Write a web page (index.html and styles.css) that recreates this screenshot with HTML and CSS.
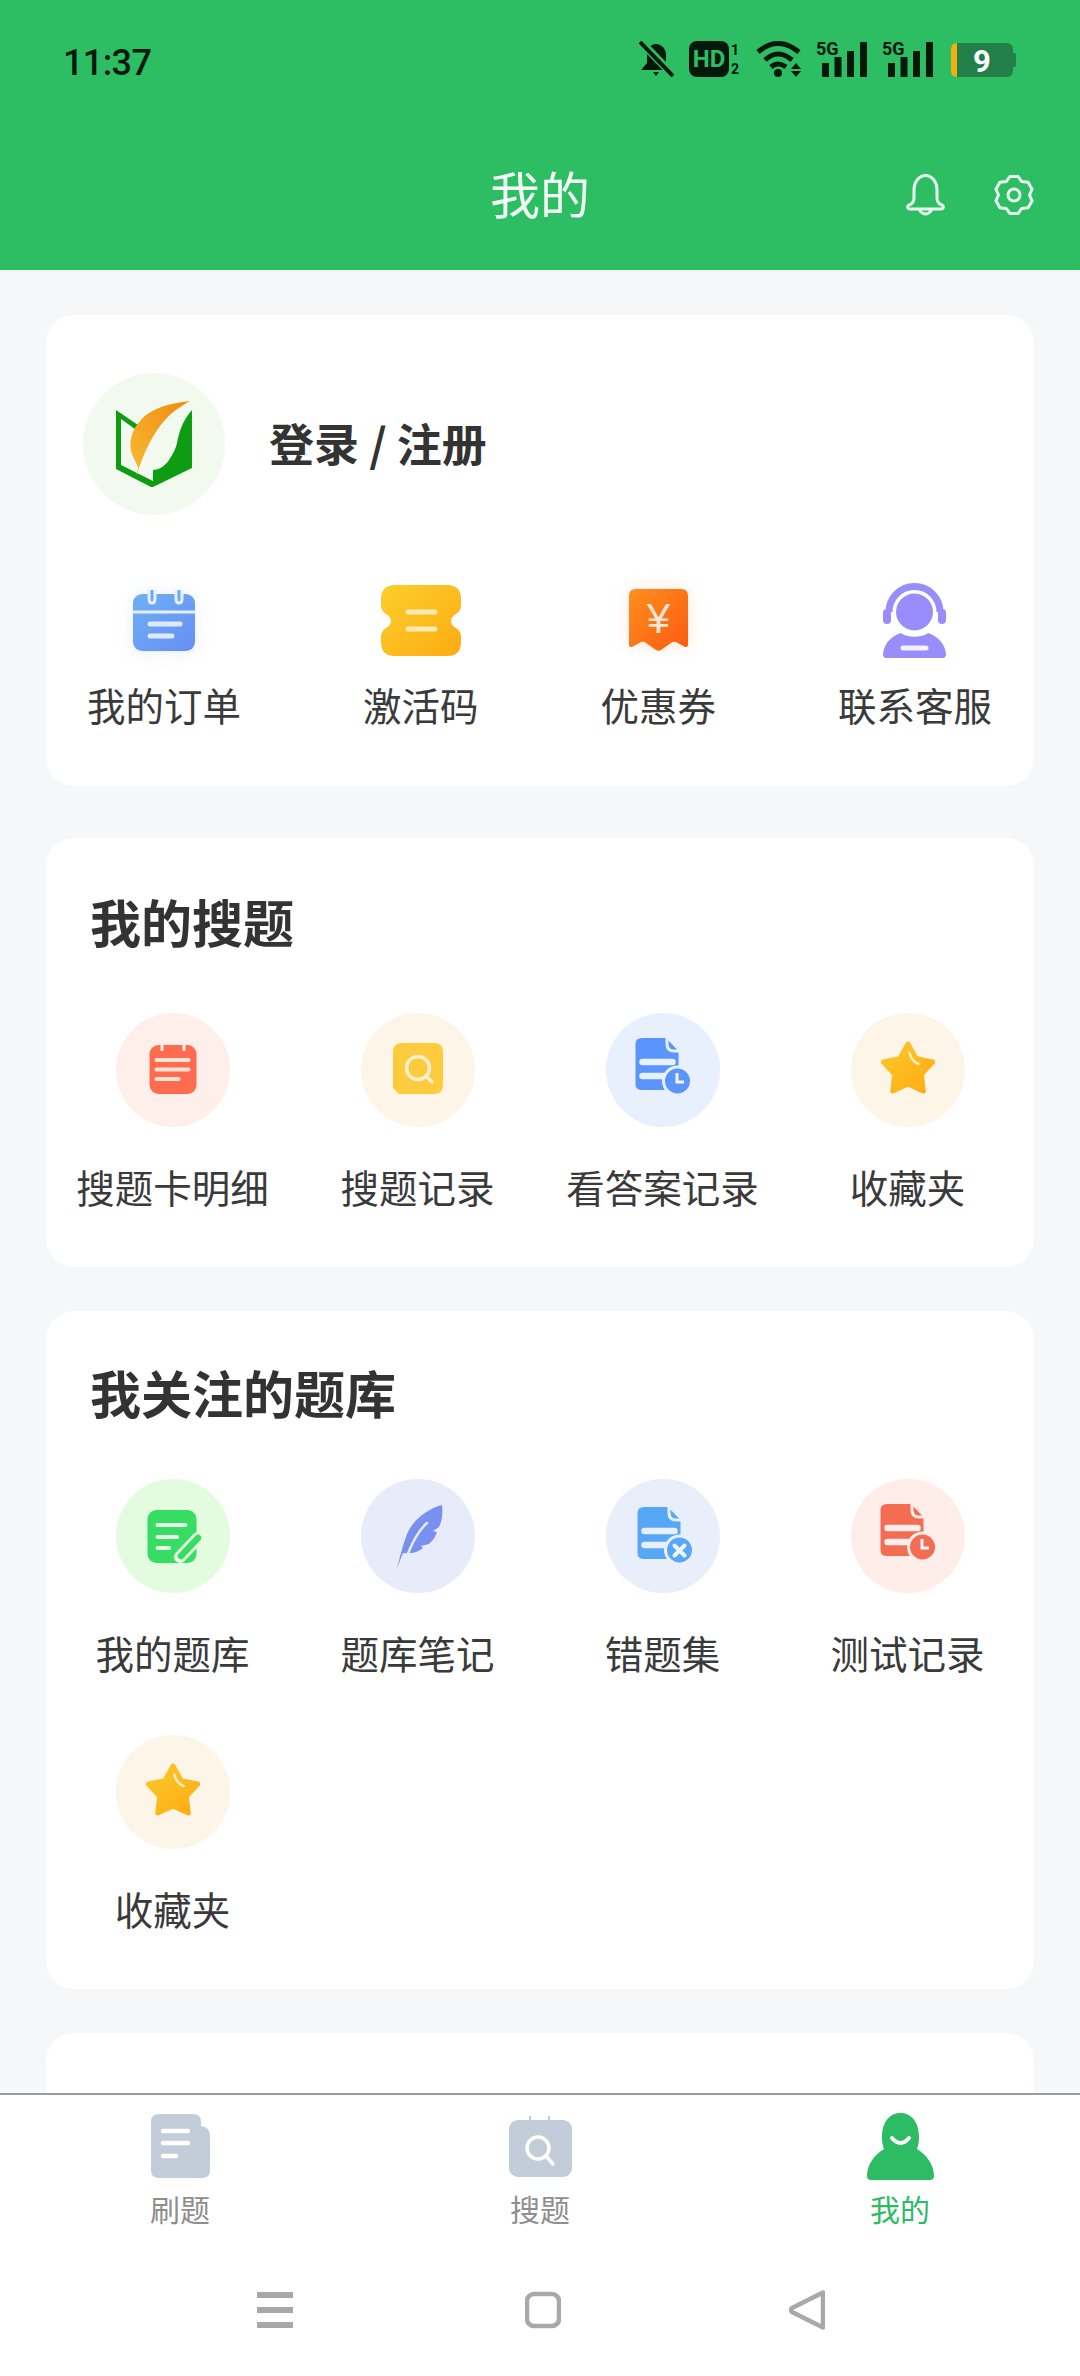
FILE: index.html
```html
<!DOCTYPE html>
<html lang="zh-CN">
<head>
<meta charset="utf-8">
<title>我的</title>
<link rel="stylesheet" href="styles.css">
</head>
<body>
<svg class="defs" width="0" height="0" aria-hidden="true">
  <defs>
    <linearGradient id="gOrder" x1="0" y1="0" x2="1" y2="1"><stop offset="0" stop-color="#6fb0f6"/><stop offset="1" stop-color="#668ef3"/></linearGradient>
    <linearGradient id="gCode" x1="0" y1="0" x2="1" y2="1"><stop offset="0" stop-color="#fbcf2c"/><stop offset="1" stop-color="#fdab12"/></linearGradient>
    <linearGradient id="gTicket" x1="0" y1="0" x2="1" y2="1"><stop offset="0" stop-color="#ff8f1f"/><stop offset="1" stop-color="#fb5a10"/></linearGradient>
    <linearGradient id="gStar" x1="0" y1="0" x2="1" y2="1"><stop offset="0" stop-color="#fcc82c"/><stop offset="1" stop-color="#fdac12"/></linearGradient>
    <linearGradient id="gLeaf" x1="1" y1="0" x2="0" y2="1"><stop offset="0" stop-color="#ee8a12"/><stop offset="1" stop-color="#f9bb30"/></linearGradient>
    <symbol id="doc" viewBox="0 0 114 114">
      <path class="fill" d="M36,25H60L72.5,38V71Q72.5,77 66,77H36Q29.5,77 29.5,71V31Q29.5,25 36,25Z"/>
      <path class="tint-line thin" d="M61,24V31Q61,38 68,38H74"/>
      <path class="tint-line bar" d="M36.5,49H66.5M36.5,63H58"/>
      <circle class="fill ring" cx="71.5" cy="68" r="14"/>
    </symbol>
    <symbol id="star" viewBox="0 0 114 114">
      <path class="star-body" d="M57,31L65.2,45.7L81.7,49L70.3,61.3L72.3,78L57,71L41.7,78L43.7,61.3L32.3,49L48.8,45.7Z"/>
      <path class="star-shine" d="M58.5,40Q60.5,48 67.5,51"/>
    </symbol>
  </defs>
</svg>

<div class="app">
  <header class="header">
    <div class="status">
      <span class="time">11:37</span>
      <div class="status-icons">
        <svg class="si-bell" width="35" height="36" viewBox="0 0 35 36">
          <path class="ink" d="M17,3C23,3 27,8 27,14V22L32,29H2L8,22V14C8,8 11,3 17,3Z"/>
          <path class="ink" d="M14,31H20L17,35Z"/>
          <path class="slash-bg" d="M1,0L34,34"/>
          <path class="slash" d="M1,1L34,35"/>
        </svg>
        <svg class="si-hd" width="51" height="36" viewBox="0 0 51 36">
          <rect class="ink" x="0" y="0" width="40" height="36" rx="8"/>
          <text class="hd-text" x="20" y="26">HD</text>
          <text class="hd-num" x="46" y="14">1</text>
          <text class="hd-num" x="46" y="33">2</text>
        </svg>
        <svg class="si-wifi" width="45" height="36" viewBox="0 0 45 36">
          <path class="wave" d="M2,11Q22,-6 43,11M9,19Q22,7 36,19M15,26Q22,20 30,26"/>
          <circle class="ink" cx="22" cy="32" r="4"/>
          <path class="ink" d="M40,22L45,28H35ZM35,30H45L40,36Z"/>
        </svg>
        <svg class="si-net" width="51" height="40" viewBox="0 -4 51 40">
          <text class="net-text" x="0" y="14">5G</text>
          <rect class="ink" x="6" y="22" width="7" height="14"/>
          <rect class="ink" x="18.5" y="16" width="7" height="20"/>
          <rect class="ink" x="31" y="10" width="7" height="26"/>
          <rect class="ink" x="44" y="1" width="7" height="35"/>
        </svg>
        <svg class="si-net" width="51" height="40" viewBox="0 -4 51 40">
          <text class="net-text" x="0" y="14">5G</text>
          <rect class="ink" x="6" y="22" width="7" height="14"/>
          <rect class="ink" x="18.5" y="16" width="7" height="20"/>
          <rect class="ink" x="31" y="10" width="7" height="26"/>
          <rect class="ink" x="44" y="1" width="7" height="35"/>
        </svg>
        <svg class="si-batt" width="65" height="40" viewBox="0 0 65 40">
          <rect class="batt-body" x="0" y="2" width="62" height="34" rx="6"/>
          <path class="batt-nub" d="M62,12H64Q65,12 65,14V24Q65,26 64,26H62Z"/>
          <path class="batt-low" d="M6,2V36Q0,36 0,30V8Q0,2 6,2Z"/>
          <text class="batt-text" x="31" y="31">9</text>
        </svg>
      </div>
    </div>
    <div class="topbar">
      <h1 class="page-title">我的</h1>
      <div class="top-actions">
        <svg class="top-icon" width="39" height="42" viewBox="0 0 39 42">
          <path class="line-w" d="M19.5,1.5C26,1.5 31,8 31,16V24C31,28 33,30 36,31Q38,32.5 37,34Q36.5,35 35,35H4Q2.5,35 2,34Q1,32.5 3,31C6,30 8,28 8,24V16C8,8 13,1.5 19.5,1.5Z"/>
          <path class="line-w" d="M14,37Q19.5,43 25,37"/>
        </svg>
        <svg class="top-icon" width="40" height="40" viewBox="0 0 40 40">
          <path class="line-w" d="M16.05,1.42L23.95,1.42L27.75,6.58L34.12,7.29L38.07,14.13L35.5,20L38.07,25.87L34.12,32.71L27.75,33.42L23.95,38.58L16.05,38.58L12.25,33.42L5.88,32.71L1.93,25.87L4.5,20L1.93,14.13L5.88,7.29L12.25,6.58Z"/>
          <circle class="line-w" cx="20" cy="20" r="6"/>
        </svg>
      </div>
    </div>
  </header>

  <main class="content">
    <section class="card card-profile">
      <div class="profile">
        <div class="avatar">
          <svg width="142" height="142" viewBox="0 0 142 142">
            <path class="logo-green" d="M33,37L55,52L52,56L38,46V92L70,108V114L68,114L33,96Z"/>
            <path class="logo-green" d="M109,37V95L70,114V97C76,97 82,93 86,87C90,81 93,75 94,70C96,60 99,48 109,37Z"/>
            <path class="logo-leaf" d="M107,28C88,30 68,35 58,47C49,56 46,68 48,78C50,85 54,90 55,95L53,103L60,84C65,72 72,58 82,47C90,38 100,32 107,28Z"/>
          </svg>
        </div>
        <span class="login">登录 / 注册</span>
      </div>
      <div class="quick">
        <div class="quick-item">
          <div class="quick-icon">
            <svg class="soft-blue" width="62" height="62" viewBox="0 0 62 62">
              <rect class="order-bg" x="0" y="5" width="62" height="57" rx="9"/>
              <path class="order-div" d="M0,23H62"/>
              <path class="order-ring" d="M16,1V10Q16,14 19,14Q22,14 22,10V1M43,1V10Q43,14 46,14Q49,14 49,10V1"/>
              <path class="order-line" d="M17,35H47M17,47H39"/>
            </svg>
          </div>
          <span class="label">我的订单</span>
        </div>
        <div class="quick-item">
          <div class="quick-icon">
            <svg width="80" height="71" viewBox="0 0 80 71">
              <path class="code-bg" d="M14,0H66Q80,0 80,14V20Q80,26 75,29Q70,32 70,36Q70,40 75,43Q80,46 80,52V57Q80,71 66,71H14Q0,71 0,57V52Q0,46 5,43Q10,40 10,36Q10,32 5,29Q0,26 0,20V14Q0,0 14,0Z"/>
              <path class="code-line" d="M27,27H54M27,44H54"/>
            </svg>
          </div>
          <span class="label">激活码</span>
        </div>
        <div class="quick-item">
          <div class="quick-icon">
            <svg class="soft-orange" width="59" height="62" viewBox="0 0 59 62">
              <path class="ticket-bg" d="M7,0H52Q59,0 59,7V56Q59,58 56,58L47,53Q44,52 42,54L32,61Q29.5,62.5 27,61L17,54Q15,52 12,53L3,58Q0,58 0,56V7Q0,0 7,0Z"/>
              <text class="ticket-text" x="29.5" y="44">¥</text>
            </svg>
          </div>
          <span class="label">优惠券</span>
        </div>
        <div class="quick-item">
          <div class="quick-icon">
            <svg width="63" height="75" viewBox="0 0 63 75">
              <path class="svc-arc" d="M6,29A25.5,25.5 0 0 1 57,29"/>
              <rect class="svc" x="0" y="26" width="8" height="15" rx="4"/>
              <rect class="svc" x="55" y="26" width="8" height="15" rx="4"/>
              <circle class="svc" cx="31.5" cy="29" r="18.5"/>
              <path class="svc" d="M3,75Q0,75 0,71C1,60 9,53 18,50C24,55 39,55 45,50C54,53 62,60 63,71Q63,75 60,75Z"/>
              <path class="svc-bar" d="M20,65H43"/>
            </svg>
          </div>
          <span class="label">联系客服</span>
        </div>
      </div>
    </section>

    <section class="card">
      <h2 class="card-title">我的搜题</h2>
      <div class="grid">
        <div class="grid-item">
          <div class="disc disc-red">
            <svg width="114" height="114" viewBox="0 0 114 114">
              <rect class="note-bg" x="33.5" y="32" width="47" height="49" rx="9"/>
              <path class="note-notch" d="M46,31V38M68,31V38"/>
              <path class="note-line" d="M40.5,47H72.5M40.5,56.5H72.5M40.5,66H62.5"/>
            </svg>
          </div>
          <span class="label">搜题卡明细</span>
        </div>
        <div class="grid-item">
          <div class="disc disc-cream">
            <svg width="114" height="114" viewBox="0 0 114 114">
              <path class="search-bg" d="M41,30H73Q82,30 82,39V72Q82,81 73,81H38L32,75V39Q32,30 41,30Z"/>
              <circle class="search-line" cx="57" cy="55" r="11.5"/>
              <path class="search-line" d="M65,63L71,69"/>
            </svg>
          </div>
          <span class="label">搜题记录</span>
        </div>
        <div class="grid-item">
          <div class="disc disc-blue">
            <svg width="114" height="114" viewBox="0 0 114 114">
              <use href="#doc"/>
              <path class="clock-hand" d="M71,60V69H78"/>
            </svg>
          </div>
          <span class="label">看答案记录</span>
        </div>
        <div class="grid-item">
          <div class="disc disc-cream">
            <svg width="114" height="114" viewBox="0 0 114 114"><use href="#star"/></svg>
          </div>
          <span class="label">收藏夹</span>
        </div>
      </div>
    </section>

    <section class="card card-bank">
      <h2 class="card-title">我关注的题库</h2>
      <div class="grid">
        <div class="grid-item">
          <div class="disc disc-green">
            <svg width="114" height="114" viewBox="0 0 114 114">
              <rect class="edit-bg" x="31.5" y="31" width="49" height="53" rx="9"/>
              <path class="edit-line" d="M41.5,46H69.5M41.5,58H61M41.5,69H53"/>
              <path class="pen-out" d="M64,78L82,59"/>
              <path class="pen-in" d="M65,77L82,59"/>
            </svg>
          </div>
          <span class="label">我的题库</span>
        </div>
        <div class="grid-item">
          <div class="disc disc-indigo">
            <svg width="114" height="114" viewBox="0 0 114 114">
              <path class="feather" d="M81,26C66,30 50,42 45,58C42,66 40,74 36,89L42,74C48,75 56,74 62,69L60,67L68,65C71,62 74,59 76,53L72,52L78,48C81,42 82,35 81,26Z"/>
              <path class="feather-slit" d="M66,44C57,52 50,66 45,80"/>
            </svg>
          </div>
          <span class="label">题库笔记</span>
        </div>
        <div class="grid-item">
          <div class="disc disc-sky">
            <svg width="114" height="114" viewBox="0 0 114 114">
              <use href="#doc" x="2" y="3"/>
              <path class="clock-x" d="M68.5,66.5L78.5,76.5M78.5,66.5L68.5,76.5"/>
            </svg>
          </div>
          <span class="label">错题集</span>
        </div>
        <div class="grid-item">
          <div class="disc disc-coral">
            <svg width="114" height="114" viewBox="0 0 114 114">
              <use href="#doc"/>
              <path class="clock-hand" d="M71,60V69H78"/>
            </svg>
          </div>
          <span class="label">测试记录</span>
        </div>
        <div class="grid-item">
          <div class="disc disc-cream">
            <svg width="114" height="114" viewBox="0 0 114 114"><use href="#star"/></svg>
          </div>
          <span class="label">收藏夹</span>
        </div>
      </div>
    </section>

    <section class="card card-more"></section>
  </main>

  <nav class="tabs">
    <div class="tab">
      <div class="tab-icon">
        <svg width="59" height="64" viewBox="0 0 59 64">
          <path class="tab-fill" d="M8,0H42Q50,0 50,8V12Q59,13 59,22V56Q59,64 51,64H8Q0,64 0,56V8Q0,0 8,0Z"/>
          <path class="tab-line" d="M12,17H37M12,29H37M12,42H25"/>
        </svg>
      </div>
      <span class="tab-label">刷题</span>
    </div>
    <div class="tab">
      <div class="tab-icon">
        <svg width="63" height="61" viewBox="0 0 63 61">
          <rect class="tab-fill" x="0" y="4" width="63" height="57" rx="9"/>
          <path class="tab-notch" d="M21,0V5M40,0V5"/>
          <circle class="tab-search" cx="29" cy="32" r="11"/>
          <path class="tab-search" d="M37,40L44,48"/>
        </svg>
      </div>
      <span class="tab-label">搜题</span>
    </div>
    <div class="tab tab-active">
      <div class="tab-icon">
        <svg width="67" height="67" viewBox="0 0 67 67">
          <path class="me-fill" d="M33.5,0C45,0 52,10 52,24C52,30 51,33 50,36C60,42 67,52 67,63Q67,67 63,67H4Q0,67 0,63C0,52 7,42 17,36C16,33 15,30 15,24C15,10 22,0 33.5,0Z"/>
          <path class="me-smile" d="M25,25Q33.5,35 42,25"/>
        </svg>
      </div>
      <span class="tab-label">我的</span>
    </div>
  </nav>

  <div class="sysnav">
    <svg class="sys-first" width="36" height="40" viewBox="0 0 36 40">
      <path class="sys-menu" d="M0,5H36M0,20H36M0,35H36"/>
    </svg>
    <svg width="36" height="40" viewBox="0 0 36 40">
      <rect class="sys-line" x="2" y="4" width="32" height="32" rx="7"/>
    </svg>
    <svg width="36" height="40" viewBox="0 0 36 40">
      <path class="sys-line" d="M34,3V37Q34,38 33,37L3,22Q1,20 3,18L33,3Q34,2 34,3Z"/>
    </svg>
  </div>
</div>
</body>
</html>
```
FILE: styles.css
```css
* { box-sizing: border-box; }
html, body { margin: 0; padding: 0; }
body {
  width: 1080px;
  height: 2376px;
  overflow: hidden;
  background: #f5f7f9;
  font-family: "Noto Sans CJK SC", "Noto Sans", sans-serif;
  color: #333;
}
h1, h2 { margin: 0; font-weight: inherit; }
svg { display: block; }
.defs { position: absolute; }

.app { display: flex; flex-direction: column; height: 2376px; }

/* header */
.header { height: 270px; flex: none; background: #2dbe64; padding-top: 41px; }
.status {
  display: flex;
  justify-content: space-between;
  align-items: flex-start;
  height: 36px;
  padding: 0 64px 0 63px;
}
.time {
  font: 500 36px/36px Roboto, sans-serif;
  letter-spacing: -.6px;
  color: #04190c;
  padding-top: 4px;
}
.status-icons { display: flex; align-items: flex-start; }
.si-bell { margin-right: 15px; }
.si-hd { margin-right: 16px; }
.si-wifi { margin-right: 15px; }
.si-net { margin: -4px 15px 0 0; }
.si-net + .si-batt { margin-left: 3px; }
.ink { fill: #04190c; }
.slash-bg { stroke: #2dbe64; stroke-width: 8; fill: none; }
.slash { stroke: #04190c; stroke-width: 4; fill: none; }
.wave { fill: none; stroke: #04190c; stroke-width: 5; }
.hd-text { font: 700 24px Roboto, sans-serif; fill: #2dbe64; text-anchor: middle; }
.hd-num { font: 700 14px Roboto, sans-serif; fill: #04190c; text-anchor: middle; }
.net-text { font: 700 18px Roboto, sans-serif; fill: #04190c; }
.batt-body { fill: #237f48; }
.batt-nub { fill: #237f48; }
.batt-low { fill: #f2b00e; }
.batt-text { font: 700 31px Roboto, sans-serif; fill: #fff; text-anchor: middle; }

.topbar {
  display: flex;
  align-items: center;
  justify-content: center;
  height: 80px;
  margin-top: 75px;
  position: relative;
}
.page-title { font-size: 50px; line-height: 80px; color: #f4fff8; font-weight: 400; }
.top-actions {
  position: absolute;
  right: 46px;
  top: 22px;
  display: flex;
  align-items: center;
  gap: 49px;
}
.line-w { fill: none; stroke: #e9fbf0; stroke-width: 3; stroke-linejoin: round; stroke-linecap: round; }

/* content */
.content {
  flex: 1;
  min-height: 0;
  overflow: hidden;
  padding: 45px 46px 0;
  display: flex;
  flex-direction: column;
  gap: 44px;
}
.card {
  flex: none;
  background: #fff;
  border-radius: 28px;
  padding: 53px 4px 58px;
}
.card-profile { padding: 58px 42px 59px 37px; margin-bottom: 8px; }
.card-bank { padding-top: 51px; }
.card-more { height: 300px; }
.profile { display: flex; align-items: center; gap: 44px; }
.avatar { width: 142px; height: 142px; border-radius: 50%; background: #f2faf0; }
.logo-green { fill: #0e9d12; }
.logo-leaf { fill: url(#gLeaf); }
.login { font-size: 45px; line-height: 60px; font-weight: 700; color: #333; padding-bottom: 3px; }

.quick { display: flex; justify-content: space-between; margin-top: 67px; padding-left: 4px; }
.quick-item { display: flex; flex-direction: column; align-items: center; gap: 23px; }
.quick-icon { height: 76px; display: flex; align-items: center; justify-content: center; }
.label { font-size: 38.5px; line-height: 46px; color: #3a3a3a; white-space: nowrap; }
.soft-blue { filter: drop-shadow(0 2px 8px rgba(100, 140, 245, .15)); }
.soft-orange { filter: drop-shadow(0 0 8px rgba(255, 120, 40, .18)); }

.order-bg { fill: url(#gOrder); }
.order-div { stroke: #e6effd; stroke-width: 3; }
.order-ring { fill: #6fa8f5; stroke: #e6effd; stroke-width: 3; }
.order-line { stroke: #dfe9fd; stroke-width: 5; stroke-linecap: round; fill: none; }
.code-bg { fill: url(#gCode); }
.code-line { stroke: #ffeab5; stroke-width: 5; stroke-linecap: round; fill: none; }
.ticket-bg { fill: url(#gTicket); }
.ticket-text { font: 400 42px "Liberation Sans", sans-serif; fill: #ffe6d2; text-anchor: middle; }
.svc { fill: #998cfb; }
.svc-arc { fill: none; stroke: #998cfb; stroke-width: 7; }
.svc-bar { stroke: #f4f2ff; stroke-width: 5; stroke-linecap: round; fill: none; }

.card-title {
  font-size: 51px;
  line-height: 60px;
  font-weight: 700;
  color: #333;
  padding-left: 40px;
  margin-bottom: 62px;
}
.card-bank .card-title { margin-bottom: 57px; }
.grid { display: grid; grid-template-columns: repeat(4, 245px); row-gap: 60px; }
.grid-item { display: flex; flex-direction: column; align-items: center; gap: 36px; }
.disc { width: 114px; height: 114px; border-radius: 50%; color: #5b94fb; }
.disc-red { background: #feefea; }
.disc-cream { background: #fef5e9; }
.disc-blue { background: #e8f0fe; color: #5b94fb; --tint: #e8f0fe; }
.disc-green { background: #e3fce0; }
.disc-indigo { background: #e8ecfa; }
.disc-sky { background: #e9eefb; color: #56a8f6; --tint: #e9eefb; }
.disc-coral { background: #ffede9; color: #f46d52; --tint: #ffede9; }

.fill { fill: currentColor; }
.ring { stroke: var(--tint); stroke-width: 3; }
.tint-line { fill: none; stroke: var(--tint); stroke-linecap: round; }
.tint-line.thin { stroke-width: 3; }
.tint-line.bar { stroke-width: 6.5; }
.clock-hand { fill: none; stroke: #f2f6ff; stroke-width: 3; }
.clock-x { fill: none; stroke: #eef5ff; stroke-width: 4; stroke-linecap: round; }
.note-bg { fill: #ff6b4f; }
.note-notch { stroke: #feefea; stroke-width: 3; fill: none; }
.note-line { stroke: #ffe4d6; stroke-width: 4; stroke-linecap: round; fill: none; }
.search-bg { fill: #fecb3e; }
.search-line { fill: none; stroke: #fdf0cf; stroke-width: 3.5; stroke-linecap: round; }
.star-body { fill: url(#gStar); stroke: url(#gStar); stroke-width: 5; stroke-linejoin: round; }
.star-shine { fill: none; stroke: #ffefc2; stroke-width: 2.5; stroke-linecap: round; }
.edit-bg { fill: #37dc62; }
.edit-line { stroke: #e6fbe8; stroke-width: 4; stroke-linecap: round; fill: none; }
.pen-out { stroke: #e3fce0; stroke-width: 12; stroke-linecap: round; fill: none; }
.pen-in { stroke: #37dc62; stroke-width: 6.5; stroke-linecap: round; fill: none; }
.feather { fill: #7a90f0; }
.feather-slit { fill: none; stroke: #e8ecfa; stroke-width: 2.5; stroke-linecap: round; }

/* tabs */
.tabs {
  flex: none;
  display: grid;
  grid-template-columns: repeat(3, 360px);
  background: #fff;
  border-top: 2px solid #9c9c9c;
  padding-top: 17px;
  height: 138px;
}
.tab { display: flex; flex-direction: column; align-items: center; gap: 8px; }
.tab-icon { height: 68px; display: flex; align-items: center; justify-content: center; }
.tab-label { font-size: 30px; line-height: 40px; color: #8e8e8e; }
.tab-active .tab-label { color: #2dbb63; }
.tab-fill { fill: #c3ccd9; }
.tab-line { stroke: #fff; stroke-width: 4.5; stroke-linecap: round; fill: none; }
.tab-notch { stroke: #c3ccd9; stroke-width: 2; fill: none; }
.tab-search { fill: none; stroke: #fff; stroke-width: 3.5; stroke-linecap: round; }
.me-fill { fill: #2dbb63; }
.me-smile { fill: none; stroke: #fff; stroke-width: 4; stroke-linecap: round; }

/* system navigation */
.sysnav {
  flex: none;
  background: #fff;
  height: 145px;
  padding: 59px 0 0 257px;
  display: flex;
  gap: 228px;
  align-items: flex-start;
}
.sys-first { margin-right: 4px; }
.sys-menu { stroke: #a8a8a8; stroke-width: 6; fill: none; }
.sys-line { fill: none; stroke: #a8a8a8; stroke-width: 4.5; stroke-linejoin: round; }
```
